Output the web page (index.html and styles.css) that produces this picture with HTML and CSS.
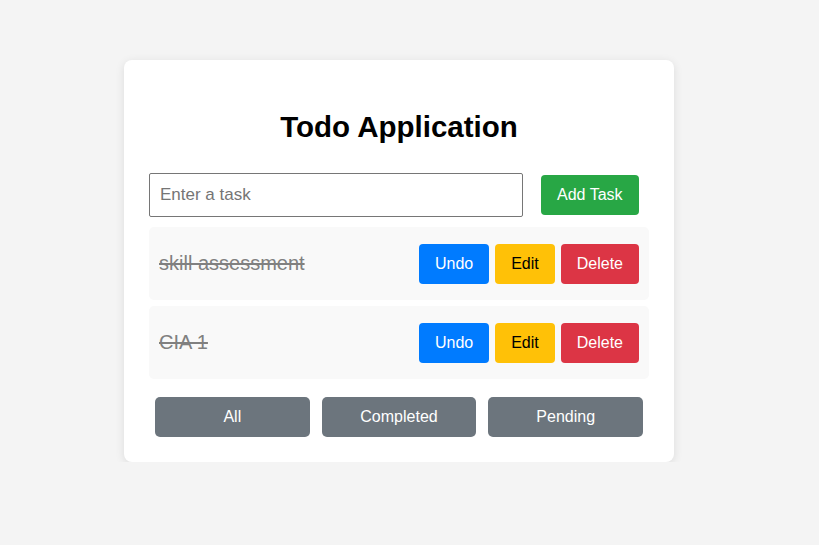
FILE: index.html
```html
<!DOCTYPE html>
<html lang="en">
<head>
<meta charset="utf-8">
<title>Todo Application</title>
<link rel="stylesheet" href="styles.css">
</head>
<body>
<div class="page">
  <div class="card">
    <h1 class="title">Todo Application</h1>
    <div class="add-row">
      <input class="task-input" type="text" placeholder="Enter a task">
      <button class="btn btn-add">Add Task</button>
    </div>
    <ul class="task-list">
      <li class="task">
        <span class="task-text done">skill assessment</span>
        <div class="actions">
          <button class="btn btn-undo">Undo</button>
          <button class="btn btn-edit">Edit</button>
          <button class="btn btn-delete">Delete</button>
        </div>
      </li>
      <li class="task">
        <span class="task-text done">CIA 1</span>
        <div class="actions">
          <button class="btn btn-undo">Undo</button>
          <button class="btn btn-edit">Edit</button>
          <button class="btn btn-delete">Delete</button>
        </div>
      </li>
    </ul>
    <div class="filters">
      <button class="btn btn-filter">All</button>
      <button class="btn btn-filter">Completed</button>
      <button class="btn btn-filter">Pending</button>
    </div>
  </div>
</div>
</body>
</html>
```
FILE: styles.css
```css
html, body {
  margin: 0;
  padding: 0;
  background: #f4f4f4;
  font-family: "Liberation Sans", Arial, sans-serif;
}

.page {
  padding: 60px 0 0 124px;
}

.card {
  box-sizing: border-box;
  width: 550px;
  padding: 25px;
  background: #ffffff;
  border-radius: 8px;
  box-shadow: 0 2px 10px rgba(0, 0, 0, 0.1);
}

.title {
  margin: 25px 0 29px;
  font-size: 29.5px;
  font-weight: bold;
  text-align: center;
  color: #000;
}

.add-row {
  display: flex;
  align-items: center;
  margin-bottom: 10px;
}

.task-input {
  box-sizing: border-box;
  width: 374px;
  height: 44px;
  padding: 0 10px;
  border: 1px solid #767676;
  border-radius: 2px;
  font-family: "Liberation Sans", Arial, sans-serif;
  font-size: 17px;
  color: #000;
}

.task-input::placeholder {
  color: #757575;
}

.btn {
  border: none;
  border-radius: 4px;
  padding: 11px 16px;
  font-family: "Liberation Sans", Arial, sans-serif;
  font-size: 16px;
  line-height: 18px;
  color: #fff;
  cursor: pointer;
}

.btn-add {
  margin-left: 18px;
  background: #28a745;
}

.task-list {
  list-style: none;
  margin: 0;
  padding: 0;
}

.task {
  display: flex;
  align-items: center;
  justify-content: space-between;
  padding: 16.5px 10px;
  margin-bottom: 6px;
  background: #f9f9f9;
  border-radius: 5px;
}

.task-text {
  font-size: 20px;
  color: #808080;
}

.task-text.done {
  text-decoration: line-through;
}

.actions {
  display: flex;
  gap: 6px;
}

.btn-undo {
  background: #007bff;
}

.btn-edit {
  background: #ffc107;
  color: #000;
}

.btn-delete {
  background: #dc3545;
}

.filters {
  display: flex;
  margin-top: 18px;
}

.btn-filter {
  flex: 1;
  margin: 0 6px;
  background: #6c757d;
  border-radius: 5px;
}
```
